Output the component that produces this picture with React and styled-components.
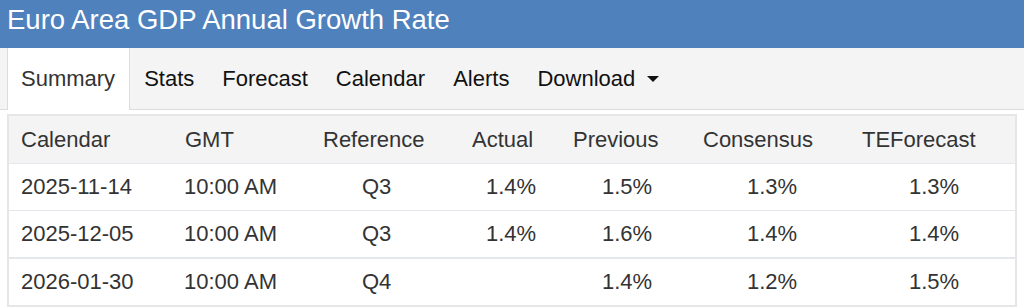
import React from 'react';
import styled, { createGlobalStyle } from 'styled-components';

const GlobalStyle = createGlobalStyle`
    body {
        margin: 0;
        background: #ffffff;
        font-family: "Liberation Sans", Arial, sans-serif;
    }
`;

const Page = styled.div`
    width: 1024px;
`;

const TitleBar = styled.div`
    height: 48px;
    box-sizing: border-box;
    padding: 4px 7px 0;
    background-color: #4f81bd;
    color: #ffffff;
    font-size: 27.5px;
    line-height: 32px;
`;

const TabBar = styled.ul`
    display: flex;
    align-items: stretch;
    height: 61px;
    margin: 0;
    padding: 0 0 0 7px;
    list-style: none;
    background-color: #f4f4f4;
    border-bottom: 1px solid #dcdcdc;
`;

const Tab = styled.li`
    display: flex;
    align-items: center;
    gap: 12px;
    padding: ${(p) => (p.$active ? '0 14px 0 13px' : '0 14px')};
    margin-bottom: ${(p) => (p.$active ? '-1px' : '0')};
    font-size: 22px;
    color: ${(p) => (p.$active ? '#333333' : '#111111')};
    background-color: ${(p) => (p.$active ? '#ffffff' : 'transparent')};
    border-left: ${(p) => (p.$active ? '1px solid #dcdcdc' : 'none')};
    border-right: ${(p) => (p.$active ? '1px solid #dcdcdc' : 'none')};
    cursor: pointer;
`;

const Caret = styled.span`
    width: 0;
    height: 0;
    border-left: 6px solid transparent;
    border-right: 6px solid transparent;
    border-top: 6px solid #111111;
`;

const TableWrap = styled.div`
    padding: 4px 7px 0;
`;

const Table = styled.table`
    width: 1010px;
    border-collapse: separate;
    border-spacing: 0;
    table-layout: fixed;
    border: 2px solid #e6e6e6;
    font-size: 22px;
    color: #333333;
`;

const Th = styled.th`
    height: 47px;
    padding: 0 0 0 ${(p) => p.$pad}px;
    text-align: left;
    font-weight: normal;
    background-color: #f4f4f4;
`;

const Td = styled.td`
    height: 46px;
    padding: 0 0 0 ${(p) => p.$pad}px;
    text-align: left;
    border-top: ${(p) => (p.$thick ? '2px' : '1px')} solid #e4e7eb;
`;

// x offsets measured from each column's left edge
const columns = [
    { label: 'Calendar', width: 164, th: 12, td: 12 },
    { label: 'GMT', width: 138, th: 12, td: 11 },
    { label: 'Reference', width: 141, th: 12, td: 51 },
    { label: 'Actual', width: 110, th: 20, td: 34 },
    { label: 'Previous', width: 130, th: 11, td: 40 },
    { label: 'Consensus', width: 160, th: 11, td: 55 },
    { label: 'TEForecast', width: 163, th: 10, td: 57 },
];

const rows = [
    ['2025-11-14', '10:00 AM', 'Q3', '1.4%', '1.5%', '1.3%', '1.3%'],
    ['2025-12-05', '10:00 AM', 'Q3', '1.4%', '1.6%', '1.4%', '1.4%'],
    ['2026-01-30', '10:00 AM', 'Q4', '', '1.4%', '1.2%', '1.5%'],
];

const tabs = ['Summary', 'Stats', 'Forecast', 'Calendar', 'Alerts', 'Download'];

export default function App() {
    return (
        <Page>
            <GlobalStyle />
            <TitleBar>Euro Area GDP Annual Growth Rate</TitleBar>
            <TabBar>
                {tabs.map((t, i) => (
                    <Tab key={t} $active={i === 0}>
                        {t}
                        {t === 'Download' && <Caret />}
                    </Tab>
                ))}
            </TabBar>
            <TableWrap>
                <Table>
                    <colgroup>
                        {columns.map((c) => (
                            <col key={c.label} style={{ width: c.width }} />
                        ))}
                    </colgroup>
                    <thead>
                        <tr>
                            {columns.map((c) => (
                                <Th key={c.label} $pad={c.th}>{c.label}</Th>
                            ))}
                        </tr>
                    </thead>
                    <tbody>
                        {rows.map((r, ri) => (
                            <tr key={r[0]}>
                                {r.map((v, ci) => (
                                    <Td key={ci} $pad={columns[ci].td} $thick={ri === 2}>{v}</Td>
                                ))}
                            </tr>
                        ))}
                    </tbody>
                </Table>
            </TableWrap>
        </Page>
    );
}
